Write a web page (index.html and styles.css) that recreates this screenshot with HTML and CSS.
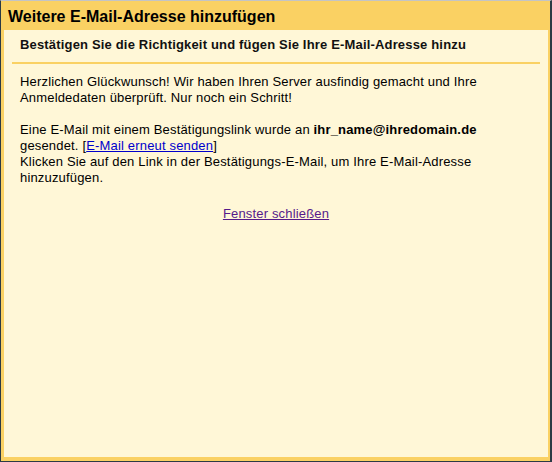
FILE: index.html
```html
<!DOCTYPE html>
<html lang="de">
<head>
<meta charset="utf-8">
<title>Weitere E-Mail-Adresse hinzufügen</title>
<link rel="stylesheet" href="styles.css">
</head>
<body>
<div class="dialog">
  <div class="titlebar">Weitere E-Mail-Adresse hinzufügen</div>
  <div class="panel">
    <div class="subhead">Bestätigen Sie die Richtigkeit und fügen Sie Ihre E-Mail-Adresse hinzu</div>
    <div class="rule"></div>
    <div class="content">
      <p class="para">Herzlichen Glückwunsch! Wir haben Ihren Server ausfindig gemacht und Ihre Anmeldedaten überprüft. Nur noch ein Schritt!</p>
      <p class="para">Eine E-Mail mit einem Bestätigungslink wurde an <b>ihr_name@ihredomain.de</b> gesendet. [<a class="link" href="#">E-Mail erneut senden</a>]<br>Klicken Sie auf den Link in der Bestätigungs-E-Mail, um Ihre E-Mail-Adresse hinzuzufügen.</p>
      <div class="close"><a class="link visited" href="#">Fenster schließen</a></div>
    </div>
  </div>
</div>
</body>
</html>
```

FILE: styles.css
```css
html, body {
  margin: 0;
  padding: 0;
}
body {
  font-family: "Liberation Sans", Arial, sans-serif;
  font-size: 13px;
  line-height: 16px;
  letter-spacing: 0.17px;
  color: #000;
}
.dialog {
  box-sizing: border-box;
  width: 552px;
  height: 462px;
  background: #fad163;
  border-top: 1px solid #c4c4c4;
  border-left: 1px solid #2b3a44;
  border-right: 2px solid #2b3a44;
  border-bottom: 1px solid #2b3a44;
  padding: 0 2px 4px 3px;
  display: flex;
  flex-direction: column;
}
.titlebar {
  height: 29px;
  box-sizing: border-box;
  padding: 7px 0 0 4px;
  font-size: 16px;
  font-weight: bold;
  line-height: 18px;
  letter-spacing: 0;
  color: #000;
}
.panel {
  flex: 1;
  background: #fff7d7;
  padding: 7px 0 0 0;
}
.subhead {
  padding: 0 16px;
  font-weight: bold;
  color: #111;
}
.rule {
  height: 2px;
  background: #fad163;
  margin: 9px 8px 10px 8px;
}
.content {
  padding: 0 20px 0 16px;
}
.para {
  margin: 0 0 16px 0;
}
.para + .para {
  margin-bottom: 20px;
}
.link {
  color: #0000cc;
  text-decoration: underline;
}
.visited {
  color: #551a8b;
}
.close {
  text-align: center;
  padding-left: 4px;
}
```
